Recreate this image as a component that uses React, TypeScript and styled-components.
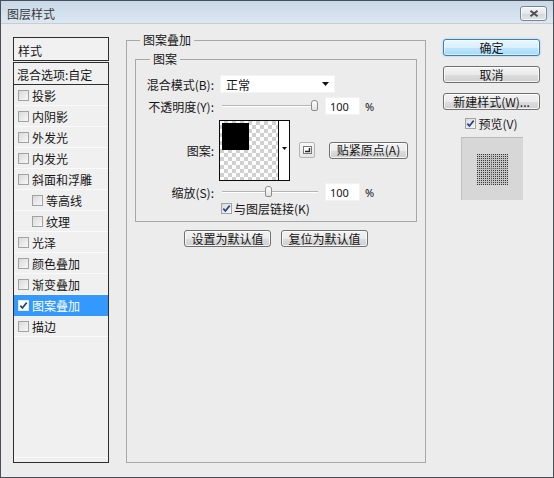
import React from 'react';
import styled, { createGlobalStyle, css } from 'styled-components';

const Global = createGlobalStyle`
  html, body { margin: 0; padding: 0; background: #ececec; }
  body {
    font-family: "Noto Sans CJK SC", "Noto Sans", sans-serif;
    font-size: 12px;
    color: #161616;
  }
  * { box-sizing: border-box; }
`;

const Window = styled.div`
  width: 554px;
  height: 478px;
  border: 1px solid #4a4f57;
  background: #ececec;
  display: flex;
  flex-direction: column;
`;

const TitleBar = styled.div`
  height: 23px;
  flex: none;
  display: flex;
  align-items: center;
  justify-content: space-between;
  padding: 3px 6px 0 6px;
  background: linear-gradient(#c8d8e8, #dce7f1);
  border-bottom: 1px solid #c3ced9;
`;

const TitleText = styled.span`
  color: #3a3a3a;
  line-height: 14px;
`;

const CloseButton = styled.div`
  width: 27px;
  height: 15px;
  border: 1px solid #7c8590;
  border-radius: 3px;
  background: linear-gradient(#f4f6f8 0%, #e3e7eb 50%, #d2d8de 51%, #dfe4e9 100%);
  box-shadow: inset 0 0 0 1px rgba(255, 255, 255, 0.7);
  display: flex;
  align-items: center;
  justify-content: center;
`;

const Body = styled.div`
  flex: 1;
  display: flex;
  padding: 10px 13px 14px 12px;
`;

/* ---------- left style list ---------- */

const LeftPanel = styled.div`
  width: 96px;
  flex: none;
  margin-top: 3px;
  display: flex;
  flex-direction: column;
`;

const PanelHeader = styled.div`
  height: 24px;
  border: 1px solid #2e2e2e;
  background: #f1f1f1;
  padding: 2px 0 0 4px;
  display: flex;
  align-items: center;
`;

const ListBox = styled.div`
  flex: 1;
  margin-top: 1px;
  border: 1px solid #2e2e2e;
  background: #f0f0f0;
  box-shadow: inset 0 -4px 0 #f0f0f0, inset 0 -5px 0 #fbfbfb;
  display: flex;
  flex-direction: column;
`;

const BlendRow = styled.div`
  height: 22px;
  border-bottom: 1px solid #2e2e2e;
  padding: 1px 0 0 3px;
  display: flex;
  align-items: center;
`;

const StyleItem = styled.div<{ $nested?: boolean; $selected?: boolean }>`
  height: 21px;
  flex: none;
  display: flex;
  align-items: center;
  gap: 3px;
  padding-left: ${p => (p.$nested ? 18 : 4)}px;
  border-bottom: 1px solid #fafafa;
  ${p =>
    p.$selected &&
    css`
      background: #3399ff;
      color: #ffffff;
      border-bottom-color: #3399ff;
    `}
`;

/* ---------- checkbox ---------- */

const CheckBoxBox = styled.span<{ $onBlue?: boolean }>`
  width: 11px;
  height: 11px;
  flex: none;
  border: 1px solid ${p => (p.$onBlue ? '#dbe9f9' : '#a2a2a2')};
  background: ${p =>
    p.$onBlue ? '#ffffff' : 'linear-gradient(135deg, #dadada 0%, #f7f7f7 100%)'};
  display: inline-flex;
  align-items: center;
  justify-content: center;
`;

const CheckBox: React.FC<{ checked?: boolean; onBlue?: boolean }> = ({ checked, onBlue }) => (
  <CheckBoxBox $onBlue={onBlue}>
    {checked && (
      <svg width="9" height="9" viewBox="0 0 9 9">
        <path d="M1.3 4.6 L3.4 7 L7.7 1.6" fill="none" stroke="#24437e" strokeWidth="1.7" />
      </svg>
    )}
  </CheckBoxBox>
);

/* ---------- middle ---------- */

const GroupBox = styled.fieldset<{ $inner?: boolean }>`
  margin: 0;
  min-width: 0;
  border: 1px solid #a8a8a8;
  padding: 0 8px ${p => (p.$inner ? '6px' : '0')} 8px;
  display: flex;
  flex-direction: column;
  ${p =>
    p.$inner
      ? css`
          margin-top: 7px;
        `
      : css`
          width: 300px;
          flex: none;
          margin-left: 17px;
        `}
`;

const Legend = styled.legend<{ $offset: number }>`
  padding: 0 3px;
  margin-left: ${p => p.$offset}px;
  line-height: 12px;
  font-size: 12px;
`;

const Row = styled.div<{ $h: number; $mt: number; $indent?: number }>`
  display: flex;
  align-items: center;
  height: ${p => p.$h}px;
  margin-top: ${p => p.$mt}px;
  padding-left: ${p => p.$indent ?? 0}px;
`;

const Label = styled.span`
  width: 70px;
  flex: none;
  margin-right: 6px;
  text-align: right;
  white-space: nowrap;
`;

const Select = styled.div`
  width: 115px;
  height: 18px;
  background: #ffffff;
  border: 1px solid #f4f4f4;
  display: flex;
  align-items: center;
  justify-content: space-between;
  padding: 0 5px 0 5px;
`;

const SliderWrap = styled.div`
  position: relative;
  width: 96px;
  height: 12px;
  margin: 0 7px 0 2px;
  flex: none;
`;

const SliderTrack = styled.div`
  position: absolute;
  left: 0;
  right: 0;
  top: 5px;
  height: 2px;
  border-top: 1px solid #b4b4b4;
  border-bottom: 1px solid #ffffff;
`;

const SliderThumb = styled.div`
  position: absolute;
  top: 0;
  width: 7px;
  height: 11px;
  border: 1px solid #8c8c8c;
  border-radius: 3px 3px 2px 2px;
  background: linear-gradient(#ffffff, #e2e2e2);
`;

const Slider: React.FC<{ pos: number }> = ({ pos }) => (
  <SliderWrap>
    <SliderTrack />
    <SliderThumb style={{ left: `${Math.round(pos * 89)}px` }} />
  </SliderWrap>
);

const NumberField = styled.div`
  width: 35px;
  height: 18px;
  background: #ffffff;
  border: 1px solid #f2f2f2;
  padding-left: 4px;
  display: flex;
  align-items: center;
  font-family: "Noto Sans", "DejaVu Sans", sans-serif;
  font-size: 11px;
`;

const Unit = styled.span`
  margin-left: 5px;
  font-family: "Noto Sans", "DejaVu Sans", sans-serif;
  font-size: 11px;
`;

const Swatch = styled.div`
  width: 71px;
  height: 61px;
  margin-left: -1px;
  border: 1px solid #0c0c0c;
  display: flex;
  background: #ffffff;
`;

const SwatchTile = styled.div`
  flex: 1;
  padding: 2px;
  background: repeating-conic-gradient(#d0d0d0 0 25%, #ffffff 0 50%) 0 0 / 8px 8px;
`;

const SwatchSquare = styled.div`
  width: 27px;
  height: 27px;
  background: #000000;
`;

const SwatchArrow = styled.div`
  width: 11px;
  flex: none;
  border-left: 1px solid #0c0c0c;
  background: #ffffff;
  display: flex;
  align-items: center;
  justify-content: center;
  padding-bottom: 4px;
`;

const IconButton = styled.div`
  width: 16px;
  height: 16px;
  margin-left: 9px;
  border: 1px solid #b4b4b4;
  border-radius: 2px;
  background: linear-gradient(#f7f7f7, #e6e6e6);
  display: flex;
  align-items: center;
  justify-content: center;
`;

const Button = styled.div<{ $primary?: boolean; $w?: number; $ml?: number }>`
  height: 17px;
  width: ${p => (p.$w ? `${p.$w}px` : '100%')};
  margin-left: ${p => p.$ml ?? 0}px;
  flex: none;
  border: 1px solid #707070;
  border-radius: 3px;
  background: linear-gradient(#f3f3f3 0%, #ebebeb 50%, #dddddd 51%, #d0d0d0 100%);
  box-shadow: inset 0 0 0 1px rgba(255, 255, 255, 0.75);
  display: flex;
  align-items: center;
  justify-content: center;
  line-height: 14px;
  white-space: nowrap;
  ${p =>
    p.$primary &&
    css`
      border-color: #3c7fb1;
      background: linear-gradient(#eaf6fd 0%, #d9f0fc 50%, #bee6fd 51%, #a7d9f5 100%);
      box-shadow: inset 0 0 0 1px rgba(255, 255, 255, 0.6), 0 0 2px #7dc3ec;
    `}
`;

const ButtonBar = styled.div`
  display: flex;
  justify-content: center;
  gap: 10px;
  margin-top: 8px;
`;

/* ---------- right ---------- */

const RightColumn = styled.div`
  width: 97px;
  flex: none;
  margin: 5px 0 0 17px;
  display: flex;
  flex-direction: column;
  align-items: center;
  gap: 10px;
`;

const PreviewToggle = styled.div`
  display: flex;
  align-items: center;
  gap: 2px;
  height: 14px;
  margin-top: -4px;
`;

const PreviewBox = styled.div`
  width: 62px;
  height: 63px;
  margin-top: -3px;
  background: #d7d7d7;
  border-top: 1px solid #b9b9b9;
  border-left: 1px solid #c2c2c2;
  display: flex;
  align-items: center;
  justify-content: center;
`;

const styleItems: { name: string; nested?: boolean; selected?: boolean }[] = [
  { name: '投影' },
  { name: '内阴影' },
  { name: '外发光' },
  { name: '内发光' },
  { name: '斜面和浮雕' },
  { name: '等高线', nested: true },
  { name: '纹理', nested: true },
  { name: '光泽' },
  { name: '颜色叠加' },
  { name: '渐变叠加' },
  { name: '图案叠加', selected: true },
  { name: '描边' },
];

const DownArrow = () => (
  <svg width="7" height="4" viewBox="0 0 7 4">
    <path d="M0 0 H7 L3.5 4 Z" fill="#111" />
  </svg>
);

export default function App() {
  return (
    <>
      <Global />
      <Window>
        <TitleBar>
          <TitleText>图层样式</TitleText>
          <CloseButton>
            <svg width="10" height="7" viewBox="0 0 10 7">
              <path d="M1.5 0.8 L8.5 6.2 M8.5 0.8 L1.5 6.2" stroke="#4f4f4f" strokeWidth="2" />
            </svg>
          </CloseButton>
        </TitleBar>
        <Body>
          <LeftPanel>
            <PanelHeader>样式</PanelHeader>
            <ListBox>
              <BlendRow>混合选项:自定</BlendRow>
              {styleItems.map(it => (
                <StyleItem key={it.name} $nested={it.nested} $selected={it.selected}>
                  <CheckBox checked={it.selected} onBlue={it.selected} />
                  <span>{it.name}</span>
                </StyleItem>
              ))}
            </ListBox>
          </LeftPanel>

          <GroupBox>
            <Legend $offset={5}>图案叠加</Legend>
            <GroupBox $inner>
              <Legend $offset={6}>图案</Legend>
              <Row $h={18} $mt={10}>
                <Label>混合模式(B):</Label>
                <Select>
                  <span>正常</span>
                  <DownArrow />
                </Select>
              </Row>
              <Row $h={18} $mt={4}>
                <Label>不透明度(Y):</Label>
                <Slider pos={1} />
                <NumberField>100</NumberField>
                <Unit>%</Unit>
              </Row>
              <Row $h={60} $mt={5}>
                <Label>图案:</Label>
                <Swatch>
                  <SwatchTile>
                    <SwatchSquare />
                  </SwatchTile>
                  <SwatchArrow>
                    <svg width="5" height="3" viewBox="0 0 5 3">
                      <path d="M0 0 H5 L2.5 3 Z" fill="#111" />
                    </svg>
                  </SwatchArrow>
                </Swatch>
                <IconButton>
                  <svg width="9" height="8" viewBox="0 0 9 8">
                    <rect x="0.5" y="0.5" width="8" height="7" fill="#fff" stroke="#777" />
                    <path d="M2 5.5 H6.5 V2" fill="none" stroke="#222" strokeWidth="1.4" />
                  </svg>
                </IconButton>
                <Button $w={79} $ml={14}>贴紧原点(A)</Button>
              </Row>
              <Row $h={18} $mt={3}>
                <Label>缩放(S):</Label>
                <Slider pos={0.483} />
                <NumberField>100</NumberField>
                <Unit>%</Unit>
              </Row>
              <Row $h={14} $mt={0} $indent={77}>
                <CheckBox checked />
                <span style={{ marginLeft: 2 }}>与图层链接(K)</span>
              </Row>
            </GroupBox>
            <ButtonBar>
              <Button $w={87}>设置为默认值</Button>
              <Button $w={87}>复位为默认值</Button>
            </ButtonBar>
          </GroupBox>

          <RightColumn>
            <Button $primary>确定</Button>
            <Button>取消</Button>
            <Button>新建样式(W)...</Button>
            <PreviewToggle>
              <CheckBox checked />
              <span>预览(V)</span>
            </PreviewToggle>
            <PreviewBox>
              <svg width="31" height="31" viewBox="0 0 31 31">
                <defs>
                  <pattern id="dots" width="2" height="2" patternUnits="userSpaceOnUse">
                    <rect width="1" height="1" fill="#3a3a3a" />
                  </pattern>
                </defs>
                <rect width="31" height="31" fill="#c4c4c4" />
                <rect width="31" height="31" fill="url(#dots)" />
                <rect x="14" width="1" height="31" fill="#8a8a8a" opacity="0.5" />
                <rect y="14" width="31" height="1" fill="#8a8a8a" opacity="0.5" />
              </svg>
            </PreviewBox>
          </RightColumn>
        </Body>
      </Window>
    </>
  );
}
